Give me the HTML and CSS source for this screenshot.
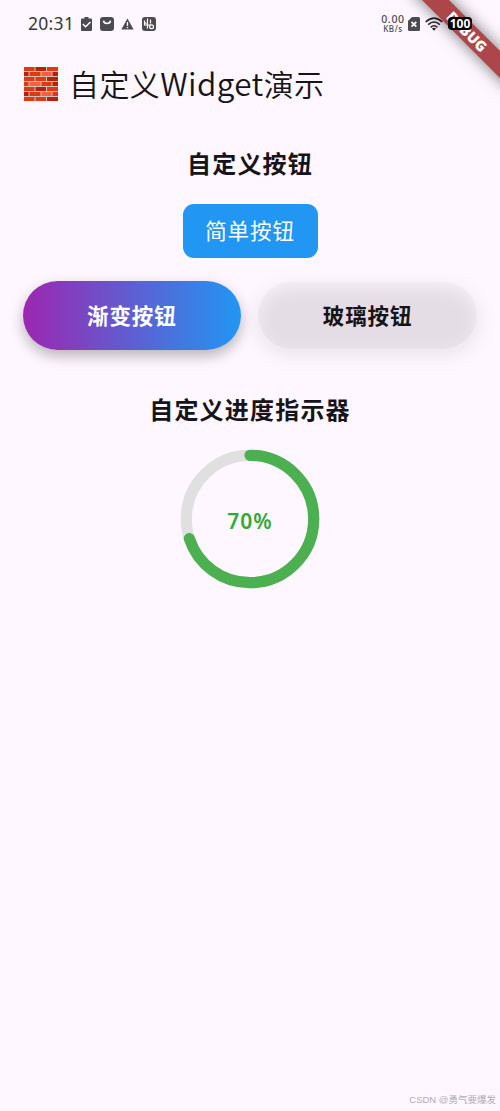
FILE: index.html
```html
<!DOCTYPE html>
<html lang="zh-CN">
<head>
<meta charset="utf-8">
<title>自定义Widget演示</title>
<link rel="stylesheet" href="styles.css">
</head>
<body>
<div class="screen">
  <header class="status">
    <div class="status-left">
      <span class="clock">20:31</span>
      <svg class="ico" width="11" height="14" viewBox="0 0 11 14"><path d="M3.500 0h4v1.400H10q1 0 1 1V13q0 1-1 1H1q-1 0-1-1V2.400q0-1 1-1h2.500z" fill="#4d4a50"/><path d="M1.800 7l2.800 2.700L9.400 5" fill="none" stroke="#fff" stroke-width="1.500"/></svg>
      <svg class="ico" width="14" height="14" viewBox="0 0 14 14"><rect width="14" height="14" rx="3" fill="#4d4a50"/><path d="M3.500 3.700q.3 2.800 3.500 2.800t3.500-2.800" fill="none" stroke="#fff" stroke-width="1.600"/></svg>
      <svg class="ico" width="13" height="14" viewBox="0 0 13 14"><path d="M6.500 1.500L12.700 12.500H.300z" fill="#4d4a50"/><path d="M6.500 5v4M6.500 10v1.300" stroke="#fff" stroke-width="1.300"/></svg>
      <svg class="ico" width="14" height="14" viewBox="0 0 14 14"><rect width="14" height="14" rx="3" fill="#4d4a50"/><path d="M5.500 1.500v10M2.500 3.500v4.500h6.500M2.500 5.500l2 1M8.500 2.500v4" fill="none" stroke="#fff" stroke-width="1.200"/><circle cx="9.600" cy="9.800" r="1.900" fill="none" stroke="#fff" stroke-width="1.200"/></svg>
    </div>
    <div class="status-right">
      <div class="speed"><span class="rate">0.00</span><span class="unit">KB/s</span></div>
      <svg class="sim" width="12" height="14" viewBox="0 0 12 14"><path d="M4 0h6.500Q12 0 12 1.500v11q0 1.500-1.500 1.500h-9Q0 14 0 12.500V4z" fill="#4d4a50"/><path d="M3.500 4.800l4.800 4.800M8.300 4.800L3.500 9.600" stroke="#fff" stroke-width="1.700"/></svg>
      <svg class="wifi" width="18" height="14" viewBox="0 0 18 14"><g fill="none" stroke="#29272b" stroke-width="1.600"><path d="M.700 5Q9-2.800 17.300 5"/><path d="M3.200 7.700Q9 2.300 14.800 7.700"/><path d="M5.600 10.300Q9 7.200 12.400 10.300"/></g><path d="M6.900 11.400Q9 9.900 11.100 11.400L9 13.700z" fill="#29272b"/></svg>
      <span class="battery">100</span>
    </div>
  </header>

  <h1 class="title">
    <svg class="brick" width="34" height="34" viewBox="0 0 34 34">
      <rect width="34" height="34" fill="#d3bdb8"/>
      <g fill="#dc3a12">
        <path d="M0 0h10.500v4H0zM23 0h11v4H23z"/>
        <path d="M5.500 5h11v4h-11z"/>
        <path d="M0 10h10.500v4H0zM11.500 10H22v4H11.500z"/>
        <path d="M0 15h4.500v4H0zM17.500 15h10v4h-10z"/>
        <path d="M0 20h10.500v4H0zM23 20h11v4H23z"/>
        <path d="M5.500 25h11v4h-11zM28.500 25H34v4h-5.500z"/>
        <path d="M0 30h10.500v4H0zM11.500 30H22v4H11.500z"/>
      </g>
      <g fill="#f8603a">
        <path d="M17.500 5h10v4h-10zM5.500 15h11v4h-11zM17.500 25h10v4h-10z"/>
      </g>
      <g fill="#b52208">
        <path d="M11.500 0H22v4H11.500zM0 5h4.500v4H0zM28.500 5H34v4h-5.500zM23 10h11v4H23zM28.500 15H34v4h-5.500zM11.500 20H22v4H11.500zM0 25h4.500v4H0zM23 30h11v4H23z"/>
      </g>
    </svg>
    <span>自定义<span class="latin">Widget</span>演示</span>
  </h1>

  <main class="content">
    <h2 class="heading">自定义按钮</h2>
    <button class="simple">简单按钮</button>
    <div class="pair">
      <button class="pill gradient">渐变按钮</button>
      <button class="pill glass">玻璃按钮</button>
    </div>
    <h2 class="heading second">自定义进度指示器</h2>
    <div class="progress">
      <svg class="ring" width="140" height="140" viewBox="0 0 140 140">
        <circle cx="70" cy="70" r="63.700" fill="none" stroke="#e0e0e0" stroke-width="11.200"/>
        <circle cx="70" cy="70" r="63.700" fill="none" stroke="#4caf50" stroke-width="11.200" stroke-linecap="round" pathLength="100" stroke-dasharray="70 100" transform="rotate(-90 70 70)"/>
      </svg>
      <span class="percent">70%</span>
    </div>
  </main>
  <footer class="credit">CSDN @勇气要爆发</footer>
  <div class="debug"><span class="ribbon">DEBUG</span></div>
</div>
</body>
</html>
```
FILE: styles.css
```css
* { box-sizing: border-box; }
body {
  margin: 0;
  background: #fef7ff;
  color: #161418;
  font-family: "Noto Sans CJK SC", sans-serif;
}
.screen {
  position: relative;
  display: flex;
  flex-direction: column;
  width: 500px;
  height: 1111px;
  overflow: hidden;
}
.status {
  display: flex;
  justify-content: space-between;
  height: 47px;
  padding: 0 28px;
}
.status-left, .status-right { display: flex; align-items: center; }
.status-left { gap: 7.800px; }
.clock {
  width: 45px;
  margin-top: -2px;
  font: 17.500px/20px "Noto Sans", sans-serif;
  letter-spacing: 0.300px;
  color: #39363b;
  white-space: nowrap;
}
.speed {
  display: flex;
  flex-direction: column;
  align-items: center;
  gap: 1px;
  width: 28px;
  font-family: "Noto Sans", sans-serif;
  font-weight: 500;
  color: #4d4a50;
}
.rate { height: 9px; font-size: 10.500px; line-height: 8px; letter-spacing: 0.700px; }
.unit { height: 8px; font-size: 8px; line-height: 8px; letter-spacing: 0.600px; }
.sim { margin-left: 1px; }
.wifi { margin-left: 5px; }
.battery {
  position: relative;
  z-index: 3;
  width: 24px;
  height: 13px;
  margin-left: 5px;
  border-radius: 4px;
  background: #000;
  color: #fff;
  font: bold 12px/13px "Noto Sans", sans-serif;
  text-align: center;
}
.title {
  display: flex;
  align-items: center;
  gap: 11px;
  height: 74px;
  margin: 0;
  padding-left: 24px;
  font-size: 30px;
  font-weight: 350;
  line-height: 40px;
  white-space: nowrap;
}
.title > span { margin-top: -4px; letter-spacing: 0.400px; }
.latin { font-size: 31.500px; letter-spacing: 0.400px; }
.content {
  display: flex;
  flex-direction: column;
  align-items: center;
  flex: 1;
  padding: 24px 22px 0;
}
.heading {
  margin: 0;
  height: 36px;
  font-size: 24px;
  font-weight: 700;
  line-height: 36px;
  letter-spacing: 1.200px;
}
button {
  border: 0;
  padding: 0 0 3px;
  color: inherit;
  font-family: inherit;
  font-size: 21.500px;
  letter-spacing: 0.900px;
}
.simple {
  width: 135px;
  height: 54px;
  margin-top: 23px;
  border-radius: 11px;
  background: #2196f3;
  color: #fff;
}
.pair { display: flex; gap: 16px; width: 100%; margin-top: 22.500px; padding-left: 0.500px; }
.pill {
  flex: 1;
  height: 69.500px;
  padding-bottom: 1px;
  border-radius: 35px;
  font-weight: 700;
}
.gradient {
  background: linear-gradient(90deg, #9c27b0, #2196f3);
  box-shadow: 0 6px 14px rgba(0, 0, 0, 0.280);
  color: #fff;
}
.glass {
  position: relative;
  border: 1.500px solid rgba(255, 255, 255, 0.350);
  background: rgba(0, 0, 0, 0.025);
}
.glass::before {
  content: "";
  position: absolute;
  z-index: -1;
  inset: 5px -2px -6px;
  border-radius: 38px;
  background: rgba(0, 0, 0, 0.080);
  filter: blur(9px);
}
.second { margin-top: 41px; }
.progress {
  display: grid;
  place-items: center;
  margin-top: 22px;
}
.ring, .percent { grid-area: 1 / 1; }
.percent {
  padding-top: 3px;
  color: #32a838;
  font: 600 21px/30px "Noto Sans", sans-serif;
  letter-spacing: 1px;
}
.credit {
  height: 18px;
  padding-right: 4px;
  color: #b0acb3;
  font: 9.500px/14px "Liberation Sans", "Noto Sans CJK SC", sans-serif;
  text-align: right;
}
.debug {
  position: absolute;
  z-index: 2;
  top: 0;
  right: 0;
  width: 130px;
  height: 110px;
  overflow: hidden;
}
.ribbon {
  position: absolute;
  left: 27px;
  top: 22px;
  width: 140px;
  height: 19px;
  transform: rotate(45deg);
  background: #ac464b;
  box-shadow: 0 0 16px rgba(0, 0, 0, 0.550);
  color: #fff;
  font: 900 14.500px/19px "Noto Sans", sans-serif;
  text-align: center;
}
```
